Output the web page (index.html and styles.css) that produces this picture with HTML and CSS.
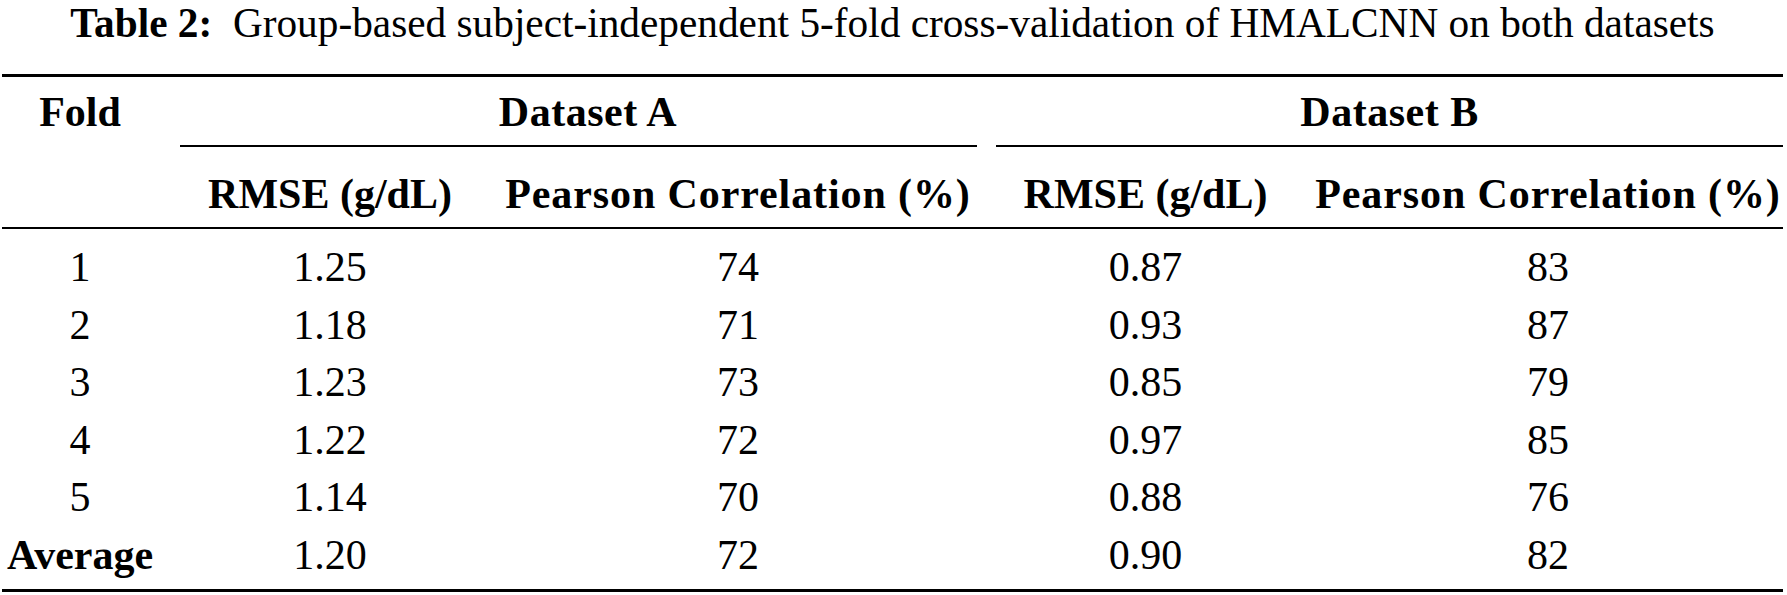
FILE: index.html
```html
<!DOCTYPE html>
<html lang="en">
<head>
<meta charset="utf-8">
<title>Table 2</title>
<link rel="stylesheet" href="styles.css">
</head>
<body>
<div class="page">
  <table class="results">
    <caption class="cap"><span class="cap-label">Table 2:</span>&nbsp; Group-based subject-independent 5-fold cross-validation of HMALCNN on both datasets</caption>
    <colgroup>
      <col class="c-fold">
      <col class="c-rmse-a">
      <col class="c-pear-a">
      <col class="c-rmse-b">
      <col class="c-pear-b">
    </colgroup>
    <thead>
      <tr class="hrow1">
        <th class="fold">Fold</th>
        <th class="group group-a" colspan="2"><div class="glabel">Dataset A</div><div class="cmid cmid-a"></div></th>
        <th class="group group-b" colspan="2"><div class="glabel">Dataset B</div><div class="cmid"></div></th>
      </tr>
      <tr class="hrow2">
        <th class="fold"></th>
        <th>RMSE (g/dL)</th>
        <th class="pearson">Pearson Correlation (%)</th>
        <th>RMSE (g/dL)</th>
        <th class="last pearson">Pearson Correlation (%)</th>
      </tr>
    </thead>
    <tbody>
      <tr class="first">
        <td class="fold">1</td><td>1.25</td><td>74</td><td>0.87</td><td class="last">83</td>
      </tr>
      <tr>
        <td class="fold">2</td><td>1.18</td><td>71</td><td>0.93</td><td class="last">87</td>
      </tr>
      <tr>
        <td class="fold">3</td><td>1.23</td><td>73</td><td>0.85</td><td class="last">79</td>
      </tr>
      <tr>
        <td class="fold">4</td><td>1.22</td><td>72</td><td>0.97</td><td class="last">85</td>
      </tr>
      <tr>
        <td class="fold">5</td><td>1.14</td><td>70</td><td>0.88</td><td class="last">76</td>
      </tr>
      <tr class="final">
        <td class="fold avg">Average</td><td>1.20</td><td>72</td><td>0.90</td><td class="last">82</td>
      </tr>
    </tbody>
  </table>
</div>
</body>
</html>
```

FILE: styles.css
```css
html, body {
  margin: 0;
  padding: 0;
  background: #ffffff;
}

body {
  font-family: "Liberation Serif", "Times New Roman", serif;
  color: #000000;
}

.page {
  padding-left: 2px;
}

.results {
  width: 1781px;
  table-layout: fixed;
  border-collapse: separate;
  border-spacing: 0;
  font-size: 42px;
}

.cap {
  caption-side: top;
  font-size: 41.3px;
  line-height: 46px;
  text-align: center;
  padding-bottom: 28px;
  white-space: nowrap;
}

.cap-label {
  font-weight: bold;
}

.c-fold { width: 178px; }
.c-rmse-a { width: 300px; }
.c-pear-a { width: 516px; }
.c-rmse-b { width: 299px; }
.c-pear-b { width: 488px; }

th, td {
  padding: 0;
  text-align: center;
  vertical-align: top;
  white-space: nowrap;
  line-height: 57px;
}

th {
  font-weight: bold;
}

.fold {
  padding-right: 22px;
}

.last {
  padding-left: 18px;
}

.pearson {
  letter-spacing: 0.9px;
}

/* header row 1 */
.hrow1 th {
  border-top: 3px solid #000;
  padding-top: 7px;
}

.glabel {
  line-height: 57px;
  letter-spacing: 0.5px;
}

.cmid {
  margin-top: 4px;
  border-top: 2px solid #000;
  height: 0;
}

.cmid-a {
  margin-right: 19px;
}

/* header row 2 */
.hrow2 th {
  padding-top: 19px;
  padding-bottom: 4px;
  border-bottom: 2px solid #000;
}

/* body */
tbody td {
  line-height: 57.6px;
}

tbody tr.first td {
  padding-top: 10px;
}

tbody tr.final td {
  padding-bottom: 4px;
  border-bottom: 3px solid #000;
}

.avg {
  font-weight: bold;
}
```
